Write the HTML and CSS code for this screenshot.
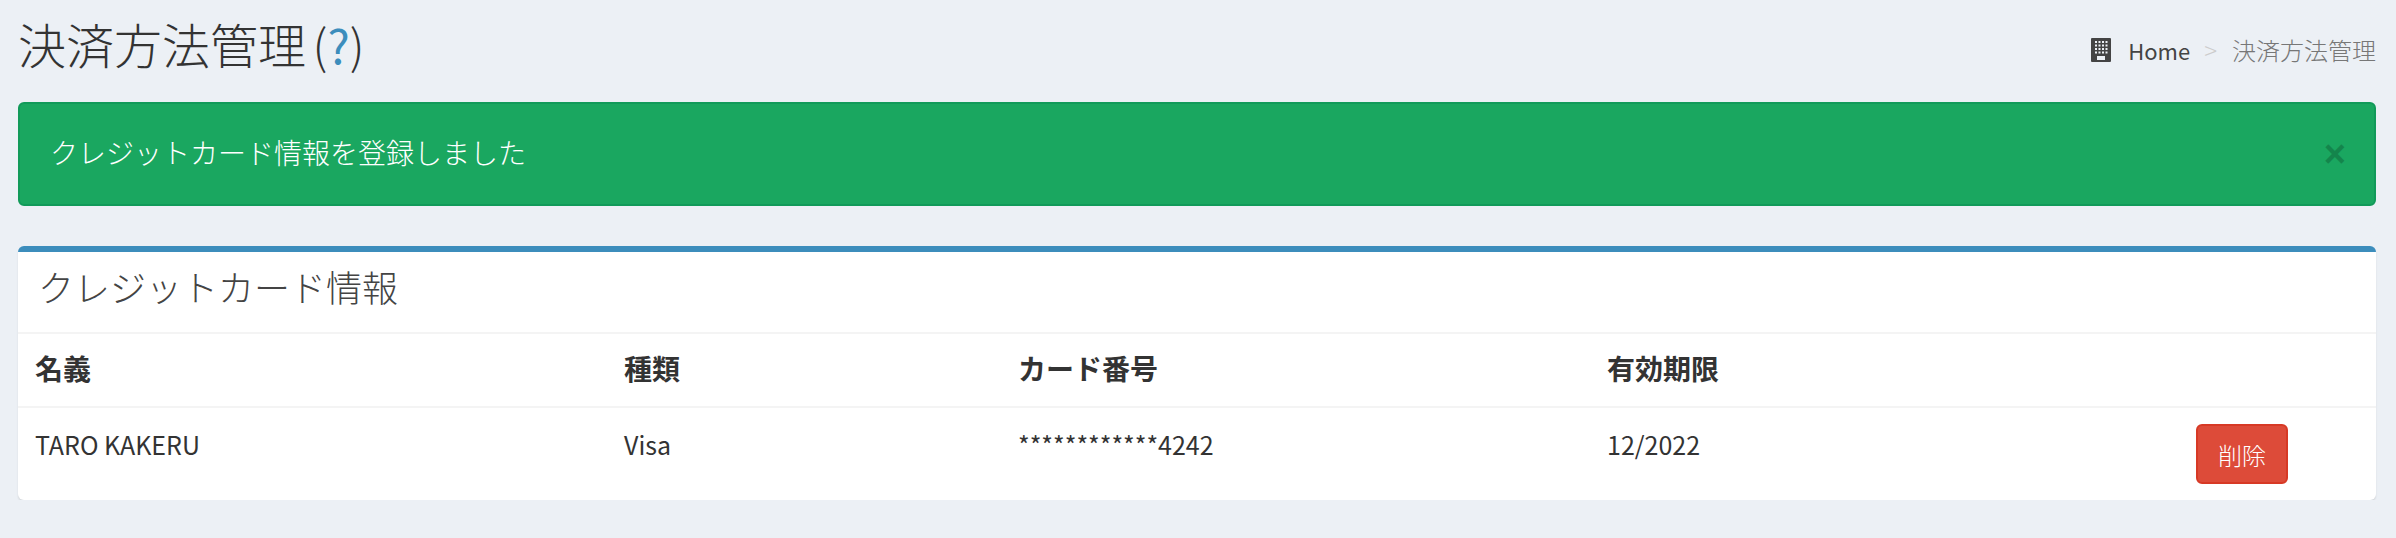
FILE: index.html
```html
<!DOCTYPE html>
<html lang="ja">
<head>
    <meta charset="UTF-8">
    <title>決済方法管理</title>
    <link rel="stylesheet" href="styles.css">
</head>
<body>
    <section class="content-header">
        <h1>決済方法管理 <small class="help">(<a href="#">?</a>)</small></h1>
        <ol class="breadcrumb">
            <li class="crumb-home">
                <svg class="crumb-icon" viewBox="0 0 20 24" aria-hidden="true">
                    <path fill="#444" fill-rule="evenodd" d="M1 0h18a1 1 0 0 1 1 1v22a1 1 0 0 1-1 1H1a1 1 0 0 1-1-1V1a1 1 0 0 1 1-1zM4 3v2h2V3zm3.5 0v2h2V3zm3.5 0v2h2V3zm3.500 0v2h2V3zM4 6.500v2h2v-2zm3.500 0v2h2v-2zm3.500 0v2h2v-2zm3.500 0v2h2v-2zM4 10v2h2v-2zm3.500 0v2h2v-2zm3.500 0v2h2v-2zm3.500 0v2h2v-2zM4 13.500v2h2v-2zm3.500 0v2h2v-2zm3.500 0v2h2v-2zm3.500 0v2h2v-2zM6 18v4h8v-4z"/>
                </svg>
                <a href="#">Home</a>
            </li>
            <li class="crumb-sep">&gt;</li>
            <li class="crumb-active">決済方法管理</li>
        </ol>
    </section>

    <section class="content">
        <div class="alert">
            <span>クレジットカード情報を登録しました</span>
            <button class="close" type="button">×</button>
        </div>

        <div class="box">
            <div class="box-header">
                <h3>クレジットカード情報</h3>
            </div>
            <table class="card-table">
                <thead>
                    <tr>
                        <th class="col-name">名義</th>
                        <th class="col-type">種類</th>
                        <th class="col-number">カード番号</th>
                        <th class="col-expiry">有効期限</th>
                        <th></th>
                    </tr>
                </thead>
                <tbody>
                    <tr>
                        <td>TARO KAKERU</td>
                        <td>Visa</td>
                        <td>************4242</td>
                        <td>12/2022</td>
                        <td class="cell-action"><button class="btn-danger" type="button">削除</button></td>
                    </tr>
                </tbody>
            </table>
        </div>
    </section>
</body>
</html>
```

FILE: styles.css
```css
* {
    box-sizing: border-box;
}
body {
    margin: 0;
    background-color: #ecf0f5;
    color: #333;
    font-family: "Noto Sans CJK JP", "Noto Sans", sans-serif;
    font-size: 24px;
    font-weight: 300;
    overflow: hidden;
}
.content-header {
    display: flex;
    justify-content: space-between;
    align-items: flex-start;
    height: 102px;
    padding: 0 20px 0 18px;
}
.content-header h1 {
    margin: 11px 0 0;
    font-size: 48px;
    font-weight: 300;
    line-height: 64px;
}
.help {
    margin-left: -4px;
    font-size: 47px;
}
.help a {
    color: #3c8dbc;
    font-weight: 400;
    text-decoration: none;
}
.breadcrumb {
    display: flex;
    align-items: center;
    margin: 32px 0 0;
    padding: 0;
    list-style: none;
    line-height: 36px;
}
.crumb-home {
    display: flex;
    align-items: center;
}
.crumb-home a {
    color: #444;
    font-size: 22px;
    font-weight: 400;
    text-decoration: none;
}
.crumb-icon {
    width: 20px;
    height: 24px;
    margin-right: 17px;
}
.crumb-sep {
    margin: 0 15px 0 14px;
    color: #ccc;
}
.crumb-active {
    color: #777;
}
.content {
    padding: 0 20px 0 18px;
}
.alert {
    display: flex;
    justify-content: space-between;
    align-items: center;
    height: 104px;
    padding: 0 28px 4px 30px;
    background-color: #1aa760;
    border: 2px solid #119a59;
    border-radius: 6px;
    color: #fff;
    font-size: 28px;
}
.close {
    margin-top: 4px;
    padding: 0;
    border: none;
    background: none;
    color: #000;
    opacity: 0.2;
    font-family: "Liberation Sans", sans-serif;
    font-size: 38px;
    font-weight: 700;
    line-height: 1;
}
.box {
    height: 254px;
    margin-top: 40px;
    background-color: #fff;
    border-top: 6px solid #3c8dbc;
    border-radius: 6px;
    box-shadow: 0 2px 2px rgba(0, 0, 0, 0.1);
}
.box-header {
    height: 82px;
    padding: 0 20px;
    border-bottom: 2px solid #f4f4f4;
}
.box-header h3 {
    margin: 0;
    color: #444;
    font-size: 36px;
    font-weight: 300;
    line-height: 69px;
}
.card-table {
    width: 100%;
    border-collapse: separate;
    border-spacing: 0;
    table-layout: fixed;
    font-size: 25px;
    font-weight: 400;
}
.card-table th {
    height: 74px;
    padding: 0 17px 4px;
    border-bottom: 2px solid #f4f4f4;
    font-size: 28px;
    font-weight: 700;
    text-align: left;
}
.card-table td {
    height: 92px;
    padding: 0 17px 20px;
}
.card-table .cell-action {
    padding: 16px 17px;
}
.col-name {
    width: 589px;
}
.col-type {
    width: 394px;
}
.col-number {
    width: 589px;
}
.col-expiry {
    width: 589px;
}
.btn-danger {
    display: block;
    width: 92px;
    height: 60px;
    background-color: #dd4b39;
    border: 2px solid #d73925;
    border-radius: 6px;
    color: #fff;
    font-family: inherit;
    font-size: 24px;
    font-weight: 300;
}
```
